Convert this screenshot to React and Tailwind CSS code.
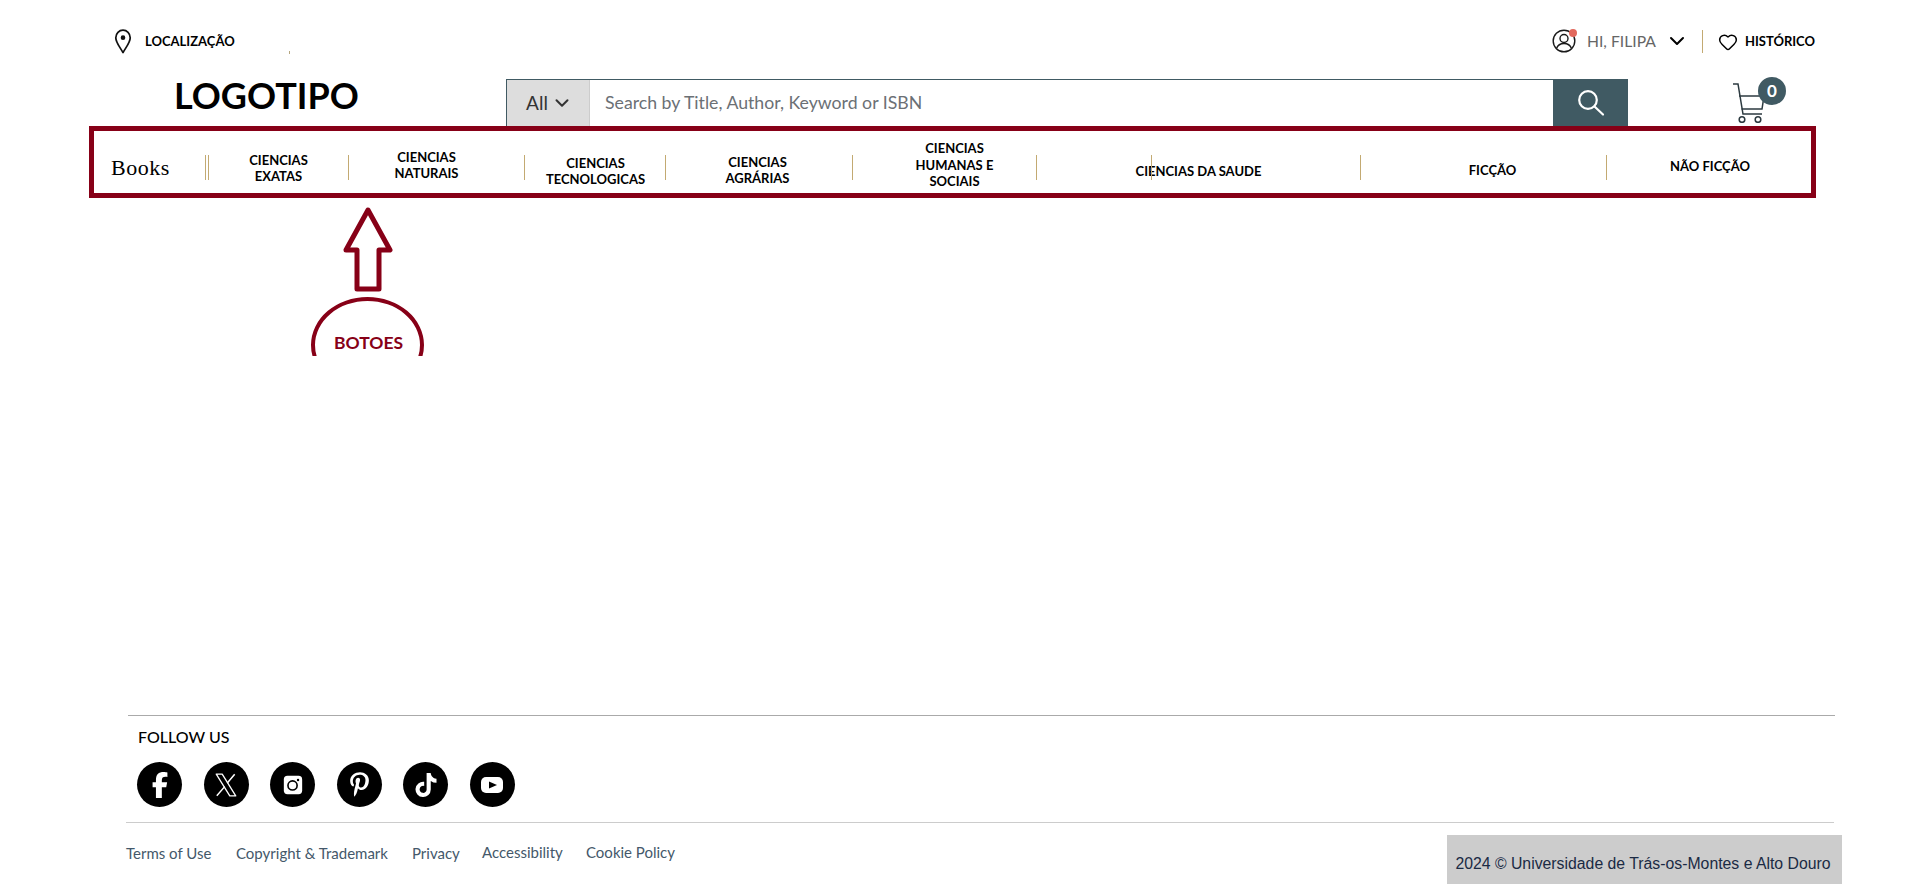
import React from "react";
import { FaFacebookF, FaPinterestP, FaTiktok } from "react-icons/fa6";
import { ChevronDown, Heart } from "lucide-react";

const navItems = [
  { lines: ["CIENCIAS", "EXATAS"], cell: "w-[139px] pt-[12px]" },
  { lines: ["CIENCIAS", "NATURAIS"], cell: "w-[175px] pt-[6px] pr-[20px]" },
  { lines: ["CIENCIAS", "TECNOLOGICAS"], cell: "w-[140px] pt-[18px] pl-[1px]" },
  { lines: ["CIENCIAS", "AGRÁRIAS"], cell: "w-[186px] pt-[16px] pr-[3px]" },
  { lines: ["CIENCIAS", "HUMANAS E", "SOCIAIS"], cell: "w-[183px] pt-[6px] pl-[20px]" },
  { lines: ["CIENCIAS DA SAUDE"], cell: "w-[323px] pt-[18px]", strayLine: true },
  { lines: ["FICÇÃO"], cell: "w-[245px] pt-[16px] pl-[18px]" },
  { lines: ["NÃO FICÇÃO"], cell: "flex-1 pt-[9px] pl-[2px]", last: true },
];

const footerLinks = [
  { label: "Terms of Use", cls: "w-[110px]" },
  { label: "Copyright & Trademark", cls: "w-[176px]" },
  { label: "Privacy", cls: "w-[70px]" },
  { label: "Accessibility", cls: "w-[104px] -mt-[1px]" },
  { label: "Cookie Policy", cls: "-mt-[1px]" },
];

function NavDivider() {
  return <span className="mt-[24px] h-[25px] w-px shrink-0 bg-[#c3aa72]" />;
}

function PinIcon() {
  return (
    <svg viewBox="0 0 18 26" className="h-[25px] w-[18px]" fill="none" stroke="#111" strokeWidth="1.8">
      <path d="M9 24.5 C6 19 1.5 14 1.5 9 C1.5 4.5 5 1.2 9 1.2 C13 1.2 16.5 4.5 16.5 9 C16.5 14 12 19 9 24.5 Z" strokeLinejoin="round" />
      <circle cx="9" cy="9" r="2.4" fill="#111" stroke="none" />
    </svg>
  );
}

function SearchIcon() {
  return (
    <svg viewBox="0 0 28 28" className="h-[28px] w-[28px]" fill="none" stroke="#fff" strokeWidth="2.2" strokeLinecap="round">
      <circle cx="11" cy="11" r="8.8" />
      <path d="M17.5 17.5 L26 25.5" />
    </svg>
  );
}

function XIcon() {
  return (
    <svg viewBox="0 0 24 24" className="h-[26px] w-[26px]" fill="none" stroke="#fff" strokeWidth="1.2">
      <path d="M3 2 H8.5 L21 22 H15.5 Z" strokeLinejoin="round" />
      <path d="M20 2 L13.2 10.2 M10.8 13.5 L3.5 22" strokeWidth="1.4" />
    </svg>
  );
}

function InstagramIcon() {
  return (
    <svg viewBox="0 0 24 24" className="h-[22px] w-[22px]">
      <rect x="2" y="2" width="20" height="20" rx="4" fill="#fff" />
      <circle cx="11.5" cy="12.5" r="5" fill="none" stroke="#000" strokeWidth="1.8" />
      <circle cx="17.5" cy="6.5" r="1.3" fill="#000" />
    </svg>
  );
}

function YoutubeIcon() {
  return (
    <svg viewBox="0 0 24 24" className="h-[24px] w-[24px]">
      <rect x="1" y="4" width="22" height="16" rx="5" fill="#fff" />
      <path d="M9 8.5 L17 12 L9 15.5 Z" fill="#000" />
    </svg>
  );
}

function UserIcon() {
  return (
    <span className="relative block h-[24px] w-[24px]">
      <svg viewBox="0 0 24 24" className="h-full w-full" fill="none" stroke="#1a1a1a" strokeWidth="1.4">
        <circle cx="12" cy="12" r="10.8" />
        <circle cx="12" cy="9.5" r="4" />
        <path d="M4.5 19.5 C6 15.5 9 14.5 12 14.5 C15 14.5 18 15.5 19.5 19.5" />
      </svg>
      <span className="absolute right-[-1px] top-0 h-[8px] w-[8px] rounded-full bg-[#e2685c]" />
    </span>
  );
}

function CartIcon() {
  return (
    <span className="relative block h-[40px] w-[32px] shrink-0">
      <svg viewBox="0 0 32 40" className="block h-[40px] w-[32px]" fill="none" stroke="#2c3a40" strokeWidth="1.5">
        <path d="M0 1 H5 L10 31 H29" />
        <path d="M6 13 H31 L29 26 H8.5" />
        <circle cx="9" cy="36.5" r="2.8" />
        <circle cx="25" cy="36.5" r="2.8" />
      </svg>
      <span className="absolute left-[25px] top-[-6px] flex h-[28px] w-[28px] items-center justify-center rounded-full bg-[#405a63] text-[17px] font-bold text-white">
        0
      </span>
    </span>
  );
}

function SocialDot({ children }) {
  return (
    <span className="flex h-[45px] w-[45px] items-center justify-center rounded-full bg-black text-white">
      {children}
    </span>
  );
}

export default function App() {
  return (
    <div className="relative flex h-screen flex-col overflow-hidden bg-white font-['Lato',sans-serif] text-black">
      <span className="absolute left-[289px] top-[51px] h-[3px] w-px bg-[#b5a680]" />

      <div className="mt-[29px] flex h-[25px] items-center justify-between pl-[114px] pr-[93px]">
        <div className="flex items-center gap-[13px]">
          <PinIcon />
          <span className="mt-[1px] text-[13px] font-bold">LOCALIZAÇÃO</span>
        </div>
        <div className="flex items-center">
          <UserIcon />
          <span className="ml-[11px] mt-[1px] text-[15.7px] text-[#666]">HI, FILIPA</span>
          <ChevronDown size={24} strokeWidth={2} className="ml-[9px]" />
          <span className="ml-[13px] h-[23px] w-px bg-[#c3aa72]" />
          <Heart size={20} strokeWidth={1.8} className="ml-[15px] mt-[1px]" />
          <span className="ml-[7px] mt-[1px] text-[13px] font-bold">HISTÓRICO</span>
        </div>
      </div>

      <div className="mt-[25px] flex h-[47px] items-center pl-[174px]">
        <div className="w-[332px] shrink-0 pb-[15px] text-[36px] font-bold leading-none">LOGOTIPO</div>
        <div className="flex h-full w-[1122px] shrink-0 border-l border-t border-[#405a63]">
          <div className="flex w-[83px] items-center justify-center gap-[3px] border-r border-[#ccc] bg-[#ddd] pl-[3px] text-[19px] text-[#333]">
            All
            <ChevronDown size={22} strokeWidth={2.2} />
          </div>
          <div className="flex flex-1 items-center pl-[15px] text-[17.7px] text-[#6b7075]">
            Search by Title, Author, Keyword or ISBN
          </div>
          <div className="flex w-[75px] items-center justify-center bg-[#405a63]">
            <SearchIcon />
          </div>
        </div>
        <div className="ml-[105px]">
          <CartIcon />
        </div>
      </div>

      <nav className="ml-[89px] flex h-[72px] w-[1727px] border-[5px] border-[#870017] text-center text-[13px] font-bold leading-[16.5px]">
        <div className="flex w-[111px] items-center pl-[17px] pt-[13px] font-['Liberation_Serif',serif] text-[22px] font-normal tracking-[0.5px]">
          Books
        </div>
        <span className="mt-[24px] h-[25px] w-[4px] shrink-0 border-x border-[#c3aa72]" />
        {navItems.map((item) => (
          <React.Fragment key={item.lines.join(" ")}>
            <div className={`relative flex items-center justify-center ${item.cell}`}>
              <div>
                {item.lines.map((line) => (
                  <div key={line}>{line}</div>
                ))}
              </div>
              {item.strayLine && (
                <span className="absolute left-[114px] top-[24px] h-[25px] w-px bg-[#c3aa72]" />
              )}
            </div>
            {!item.last && <NavDivider />}
          </React.Fragment>
        ))}
      </nav>

      <div className="ml-[311px] mt-[8px] flex w-[113px] flex-col items-center">
        <svg viewBox="0 0 50 86" className="h-[86px] w-[50px]" fill="none" stroke="#870017" strokeWidth="5" strokeLinejoin="round">
          <path d="M25 4 L47 44 H36 V83 H14 V44 H3 Z" />
        </svg>
        <div className="relative mt-[5px] h-[59px] w-full overflow-hidden">
          <div className="h-[96px] w-full rounded-[50%] border-[4px] border-[#870017]" />
          <span className="absolute inset-x-0 top-[34px] pl-[2px] text-center text-[17.5px] font-bold leading-[24px] text-[#870017]">
            BOTOES
          </span>
        </div>
      </div>

      <footer className="relative mt-auto h-[174px] pl-[126px]">
        <div className="ml-[2px] h-px w-[1707px] bg-[#aaa]" />
        <div className="ml-[12px] mt-[11px] text-[16px] font-medium leading-[20px]">FOLLOW US</div>
        <div className="ml-[11px] mt-[15px] flex gap-[21.6px]">
          <SocialDot><FaFacebookF size={26} /></SocialDot>
          <SocialDot><XIcon /></SocialDot>
          <SocialDot><InstagramIcon /></SocialDot>
          <SocialDot><FaPinterestP size={25} /></SocialDot>
          <SocialDot><FaTiktok size={24} /></SocialDot>
          <SocialDot><YoutubeIcon /></SocialDot>
        </div>
        <div className="mt-[15px] h-px w-[1708px] bg-[#ccc]" />
        <div className="mt-[20px] flex text-[15px] leading-[20px] text-[#44586a]">
          {footerLinks.map((link) => (
            <span key={link.label} className={link.cls}>{link.label}</span>
          ))}
        </div>
        <div className="absolute bottom-[5px] right-[66px] flex h-[49px] w-[395px] items-center justify-center bg-[#ccc] pr-[3px] pt-[8px] font-['Liberation_Sans',sans-serif] text-[15.8px] text-[#1a2a44]">
          2024 © Universidade de Trás-os-Montes e Alto Douro
        </div>
      </footer>
    </div>
  );
}
